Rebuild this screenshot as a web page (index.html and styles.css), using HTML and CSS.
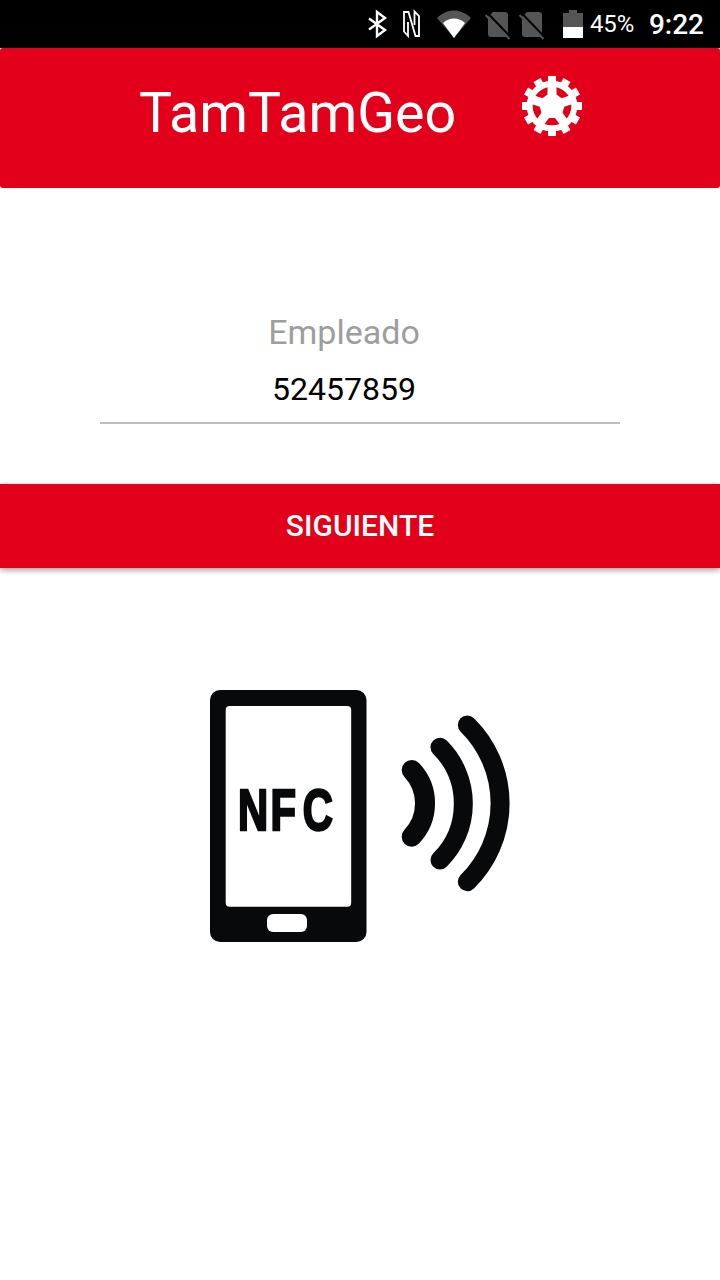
FILE: index.html
```html
<!DOCTYPE html>
<html lang="es">
<head>
<meta charset="utf-8">
<title>TamTamGeo</title>
<link rel="stylesheet" href="styles.css">
</head>
<body>
<div class="status">
  <svg class="ic-bt" viewBox="0 0 20 26"><path d="M2 7.5 18 19 10 25V1L18 7 2 18.5" fill="none" stroke="#fff" stroke-width="2.4"/></svg>
  <svg class="ic-nfc" viewBox="0 0 17 26"><path d="M5 11V25L1 20.500V1H5.500L12.500 25H16V5L11.500 .5V14" fill="none" stroke="#fff" stroke-width="1.800"/></svg>
  <svg class="ic-wifi" viewBox="0 0 34 28"><path d="M0 8C10-2 24-2 34 8L17 28Z" fill="#555"/><path d="M6 13C12 7 22 7 28 13L17 28Z" fill="#fff"/></svg>
  <svg class="ic-sim" viewBox="0 0 20 25"><path d="M5 0H17a3 3 0 0 1 3 3V22a3 3 0 0 1-3 3H3a3 3 0 0 1-3-3V5Z" fill="#555"/><path d="M0 1.500 23 25.500" stroke="#000" stroke-width="2"/><path d="M-2.500 3 21.500 27" stroke="#555" stroke-width="2"/></svg>
  <svg class="ic-sim" viewBox="0 0 20 25"><path d="M5 0H17a3 3 0 0 1 3 3V22a3 3 0 0 1-3 3H3a3 3 0 0 1-3-3V5Z" fill="#555"/><path d="M0 1.500 23 25.500" stroke="#000" stroke-width="2"/><path d="M-2.500 3 21.500 27" stroke="#555" stroke-width="2"/></svg>
  <svg class="ic-batt" viewBox="0 0 20 28"><path d="M6 0H14V3H20V17H0V3H6Z" fill="#555"/><rect y="17" width="20" height="11" fill="#fff"/></svg>
  <span class="pct">45%</span>
  <span class="clock">9:22</span>
</div>
<header class="bar">
  <h1 class="title">TamTamGeo</h1>
  <svg class="gear" viewBox="0 0 60 60">
    <g fill="#fff">
      <rect x="26" y="0" width="8" height="9"/>
      <rect x="26" y="0" width="8" height="9" transform="rotate(30 30 30)"/>
      <rect x="26" y="0" width="8" height="9" transform="rotate(60 30 30)"/>
      <rect x="26" y="0" width="8" height="9" transform="rotate(90 30 30)"/>
      <rect x="26" y="0" width="8" height="9" transform="rotate(120 30 30)"/>
      <rect x="26" y="0" width="8" height="9" transform="rotate(150 30 30)"/>
      <rect x="26" y="0" width="8" height="9" transform="rotate(180 30 30)"/>
      <rect x="26" y="0" width="8" height="9" transform="rotate(210 30 30)"/>
      <rect x="26" y="0" width="8" height="9" transform="rotate(240 30 30)"/>
      <rect x="26" y="0" width="8" height="9" transform="rotate(270 30 30)"/>
      <rect x="26" y="0" width="8" height="9" transform="rotate(300 30 30)"/>
      <rect x="26" y="0" width="8" height="9" transform="rotate(330 30 30)"/>
      <polygon points="30,15.2 44.08,25.43 38.7,41.97 21.3,41.97 15.92,25.43"/>
      <rect x="25.500" y="9" width="9" height="21"/>
      <rect x="25.500" y="9" width="9" height="21" transform="rotate(72 30 30)"/>
      <rect x="25.500" y="9" width="9" height="21" transform="rotate(144 30 30)"/>
      <rect x="25.500" y="9" width="9" height="21" transform="rotate(216 30 30)"/>
      <rect x="25.500" y="9" width="9" height="21" transform="rotate(288 30 30)"/>
    </g>
    <circle cx="30" cy="30" r="22.3" fill="none" stroke="#fff" stroke-width="6"/>
  </svg>
</header>
<main class="form">
  <label class="label">Empleado</label>
  <div class="value">52457859</div>
</main>
<button class="next">SIGUIENTE</button>
<div class="art">
  <svg class="nfc" viewBox="0 0 300 252">
    <rect width="156.500" height="252" rx="10" fill="#08090a"/>
    <rect x="15.700" y="16" width="125.500" height="200.700" rx="4" fill="#fff"/>
    <rect x="57" y="224" width="40" height="18" rx="6" fill="#fff"/>
    <text class="nfc-text" transform="scale(.72 1)" y="140"><tspan x="39">N</tspan><tspan x="84">F</tspan><tspan x="129">C</tspan></text>
    <g fill="none" stroke="#08090a" stroke-linecap="round">
      <path d="M201.700 80A48.400 48.400 0 0 1 201.700 146.700" stroke-width="20"/>
      <path d="M230 57.300A79.700 79.700 0 0 1 230 170" stroke-width="19"/>
      <path d="M257.300 35A110 110 0 0 1 257.300 191.700" stroke-width="19"/>
    </g>
  </svg>
</div>
</body>
</html>
```
FILE: styles.css
```css
* { box-sizing: border-box; }
html, body { margin: 0; padding: 0; }
body { width: 720px; height: 1280px; background: #fff; font-family: Roboto, "Liberation Sans", sans-serif; overflow: hidden; }
.status { height: 48px; background: #000; color: #fff; display: flex; align-items: center; justify-content: flex-end; padding-right: 16px; }
.status svg { display: block; flex: none; overflow: visible; }
.ic-bt { width: 20px; height: 26px; margin-right: 16px; }
.ic-nfc { width: 17px; height: 26px; margin-right: 17px; }
.ic-wifi { width: 34px; height: 28px; margin-right: 17px; }
.ic-sim { width: 20px; height: 25px; margin-right: 14px; }
.ic-sim + .ic-batt { margin-left: 7px; }
.ic-batt { width: 20px; height: 28px; margin-right: 7px; }
.pct { font-size: 24px; width: 43px; margin-right: 16px; white-space: nowrap; }
.clock { font-size: 28px; font-weight: 500; white-space: nowrap; }
.bar { height: 140px; background: #e2001a; border-radius: 3px; display: flex; align-items: center; padding: 0 0 11px 139px; }
.title { margin: 0; font-size: 55.6px; font-weight: 400; color: #fff; width: 383px; white-space: nowrap; }
.gear { width: 60px; height: 60px; display: block; margin-top: -13px; }
.form { width: 520px; height: 236px; margin: 0 auto 60px; padding: 120px 32px 0 0; text-align: center; border-bottom: 2px solid #bdbdbd; display: flex; flex-direction: column; align-items: center; }
.label { font-size: 34px; line-height: 48px; color: #9e9e9e; }
.value { font-size: 32px; line-height: 40px; margin-top: 13px; color: #000; }
.next { display: block; width: 720px; height: 84px; border: 0; padding: 0 0 2px; background: #e2001a; color: #fff; font: 500 30px Roboto, "Liberation Sans", sans-serif; box-shadow: 0 2px 6px rgba(0,0,0,.4); }
.art { display: flex; justify-content: center; padding-top: 122px; }
.nfc { width: 300px; height: 252px; display: block; }
.nfc-text { font-family: "Liberation Sans", sans-serif; font-weight: 700; font-size: 58px; fill: #08090a; stroke: #08090a; stroke-width: 2.5px; }
```
